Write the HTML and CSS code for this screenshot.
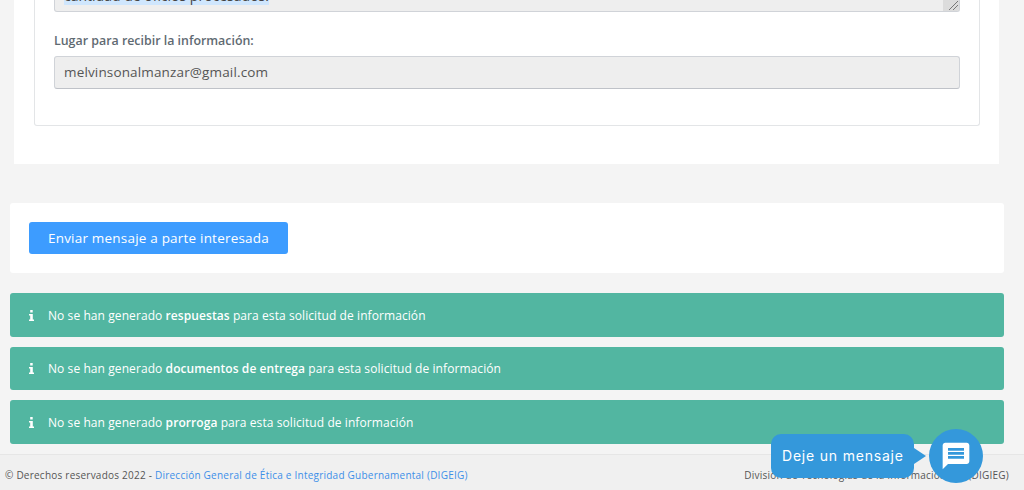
FILE: index.html
```html
<!DOCTYPE html>
<html lang="es">
<head>
<meta charset="utf-8">
<title>Solicitud de información</title>
<link rel="stylesheet" href="styles.css">
</head>
<body>
<div class="page">
  <main class="content">
    <section class="panel">
      <div class="inner-card">
        <div class="field">
          <div class="textarea">
            <span class="selected">cantidad de oficios procesados.</span>
            <svg class="grip" viewBox="0 0 16 16"><path d="M6 15 15 6M10 15l5-5" stroke="#777" stroke-width="1" fill="none"/></svg>
          </div>
        </div>
        <div class="field">
          <label class="label">Lugar para recibir la información:</label>
          <div class="input">melvinsonalmanzar@gmail.com</div>
        </div>
      </div>
    </section>
    <section class="action-card">
      <button class="btn" type="button">Enviar mensaje a parte interesada</button>
    </section>
    <div class="alert"><svg class="info" viewBox="0 0 5 11"><path fill="#fff" d="M1.200 0h2.500v2.500H1.200zM0 4h3.800v5.500H5V11H0V9.500h1.200v-4H0z"/></svg><span>No se han generado <b>respuestas</b> para esta solicitud de información</span></div>
    <div class="alert"><svg class="info" viewBox="0 0 5 11"><path fill="#fff" d="M1.200 0h2.500v2.500H1.200zM0 4h3.800v5.500H5V11H0V9.500h1.200v-4H0z"/></svg><span>No se han generado <b>documentos de entrega</b> para esta solicitud de información</span></div>
    <div class="alert"><svg class="info" viewBox="0 0 5 11"><path fill="#fff" d="M1.200 0h2.500v2.500H1.200zM0 4h3.800v5.500H5V11H0V9.500h1.200v-4H0z"/></svg><span>No se han generado <b>prorroga</b> para esta solicitud de información</span></div>
  </main>
  <footer class="footer">
    <span>© Derechos reservados 2022 - <a href="#">Dirección General de Ética e Integridad Gubernamental (DIGEIG)</a></span>
    <span>División de Tecnologías de la Información <span class="sigla">(DIGIEG)</span></span>
  </footer>
</div>
<div class="chat">
  <div class="bubble">Deje un mensaje</div>
  <div class="chat-btn">
    <svg width="32" height="32" viewBox="0 0 24 24"><path fill="#fff" d="M20 2H4c-1.100 0-2 .9-2 2v18l4-4h14c1.100 0 2-.9 2-2V4c0-1.100-.9-2-2-2zM18 14H6v-2h12v2zm0-3H6V9h12v2zm0-3H6V6h12v2z"/></svg>
  </div>
</div>
</body>
</html>
```
FILE: styles.css
```css
* { box-sizing: border-box; }
html, body { margin: 0; height: 490px; overflow: hidden; }
body { background: #f4f4f4; font-family: "Open Sans", "Liberation Sans", sans-serif; color: #555; }
.page { height: 490px; display: flex; flex-direction: column; overflow: hidden; }
.content { flex: 1; padding: 0 20px 0 10px; margin-top: -40px; }
.panel { background: #fff; margin: 0 5px 39px 4px; padding: 0 19px 38px 20px; }
.inner-card { background: #fff; border: 1px solid #e3e5e7; border-top: 0; border-radius: 3px; padding: 0 19px 36px; }
.field { display: block; }
.textarea { position: relative; height: 52px; padding: 26px 9px 0; background: #eee; border: 1px solid #d0d3d8; border-top: 0; border-radius: 3px; font-size: 14px; line-height: 20px; color: #444; overflow: hidden; margin-bottom: 20px; }
.selected { background: #cfe6fd; }
.grip { position: absolute; right: 0; bottom: 0; background: #dcdcdc; width: 16px; height: 16px; }
.label { display: block; font-size: 12.400px; font-weight: 600; line-height: 17px; color: #5f6a72; margin-bottom: 7px; }
.input { height: 33px; padding: 0 9px; background: #eee; border: 1px solid #d0d3d8; border-bottom-color: #bfc2c8; border-radius: 3px; font-size: 13.500px; line-height: 31px; color: #555; letter-spacing: .15px; }
.action-card { background: #fff; border-radius: 3px; padding: 19px; height: 70px; margin-bottom: 20px; }
.btn { display: block; width: 259px; height: 32px; padding: 0 19px; background: #3d9cff; color: #fff; border: 0; border-radius: 3px; font: 400 13.500px/32px "Open Sans", sans-serif; text-align: left; white-space: nowrap; letter-spacing: .2px; }
.alert { display: flex; align-items: center; height: 43.500px; margin-bottom: 10px; padding: 1px 19px 0; background: #52b6a1; color: #fff; border-radius: 3px; font-size: 12px; letter-spacing: .08px; }
.alert b { font-weight: 600; }
.info { width: 5px; height: 11px; margin-right: 14px; }
.footer { display: flex; justify-content: space-between; height: 36px; padding: 12px 15px 0 5px; background: #f0f0f0; border-top: 1px solid #e6e6e6; font-size: 10px; line-height: 16px; color: #555; letter-spacing: .23px; }
.footer a { color: #3d8fe8; text-decoration: none; }
.sigla { margin-left: 19px; }
.chat { position: fixed; left: 771px; top: 429px; display: flex; align-items: center; }
.bubble { position: relative; width: 143px; height: 44px; margin-right: 15px; background: #3498db; color: #fff; border-radius: 10px; font: 400 14px/44px Inter, sans-serif; padding-left: 11px; letter-spacing: .8px; white-space: nowrap; }
.bubble::after { content: ""; position: absolute; left: 143px; top: 14px; border-left: 12px solid #3498db; border-top: 8px solid transparent; border-bottom: 8px solid transparent; }
.chat-btn { display: flex; align-items: center; justify-content: center; width: 54px; height: 54px; background: #3498db; border-radius: 50%; }
```
